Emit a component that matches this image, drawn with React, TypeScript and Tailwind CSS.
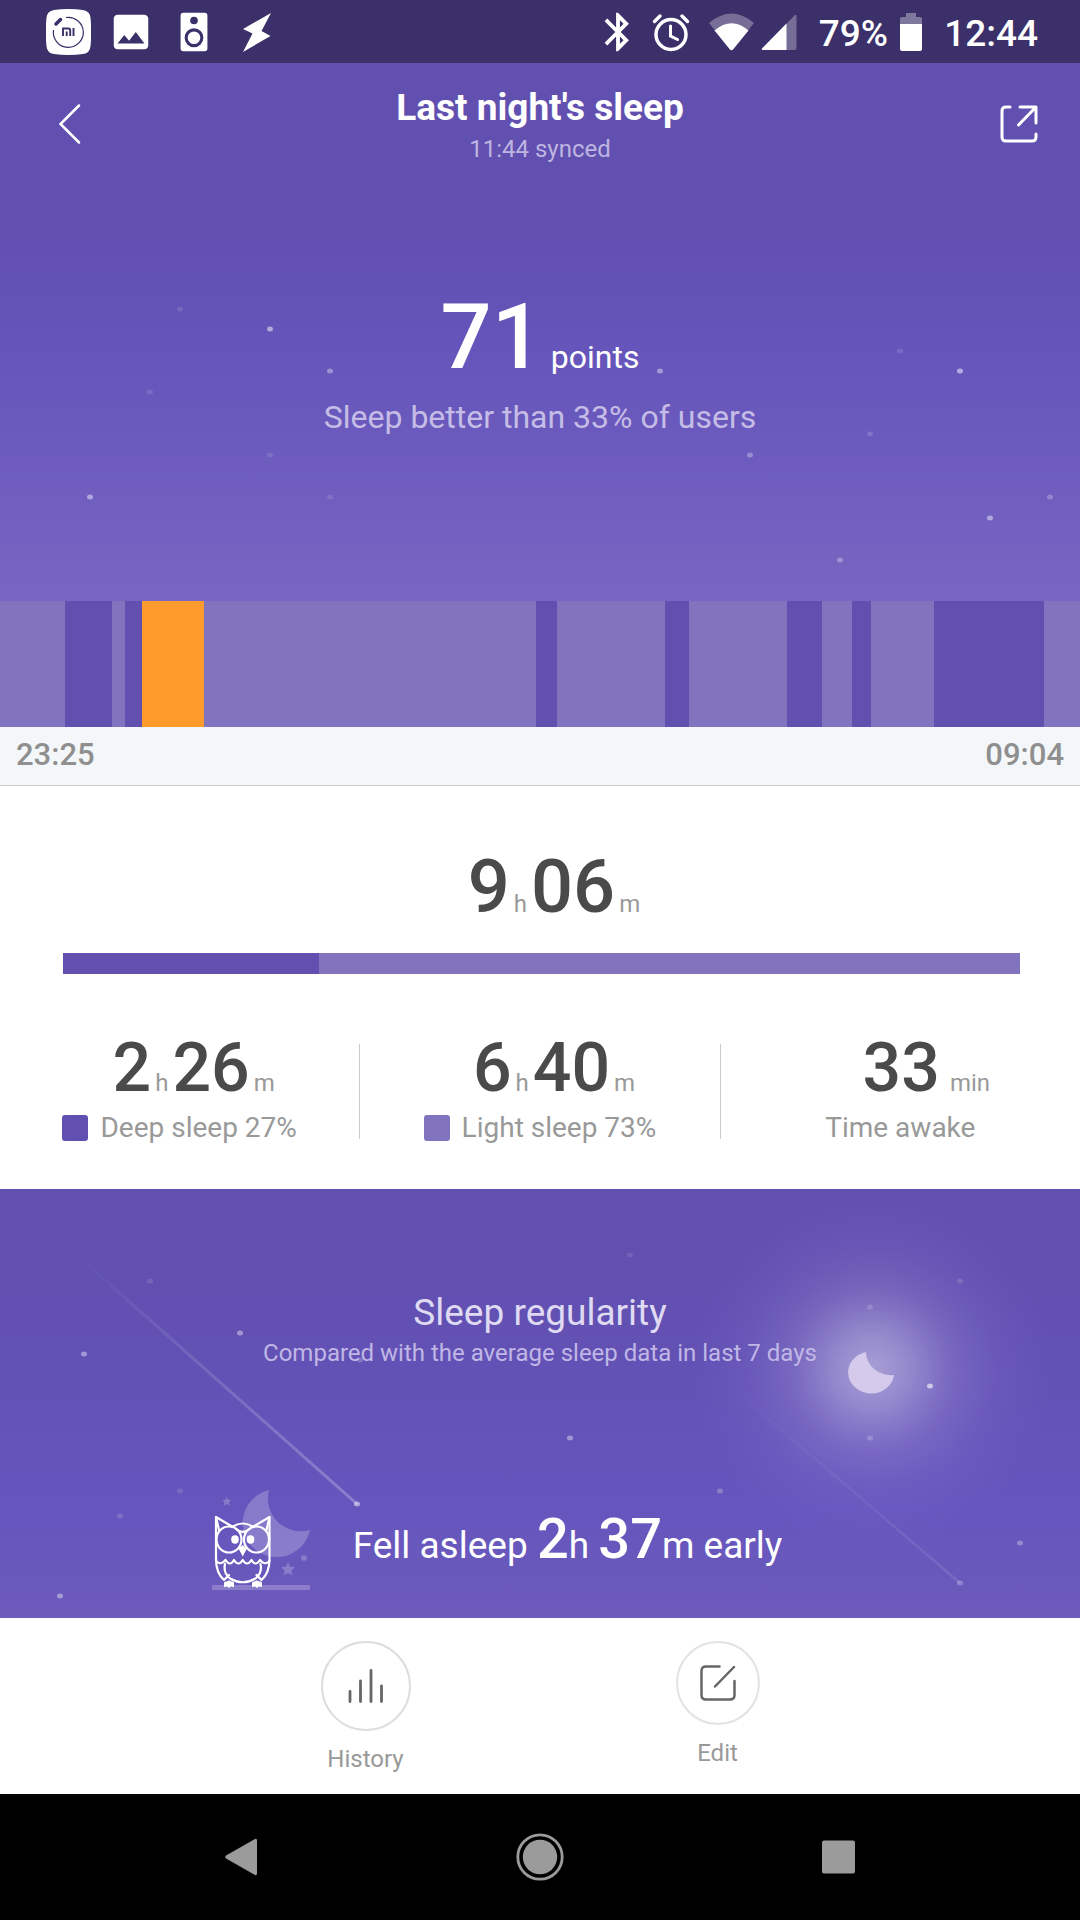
import type { ReactNode } from 'react';

type Star = { x: number; y: number; opacity: number };

const heroStars: Star[] = [
  { x: 180, y: 246, opacity: 0.12 },
  { x: 270, y: 266, opacity: 0.5 },
  { x: 330, y: 308, opacity: 0.35 },
  { x: 660, y: 308, opacity: 0.4 },
  { x: 900, y: 288, opacity: 0.12 },
  { x: 960, y: 308, opacity: 0.5 },
  { x: 150, y: 329, opacity: 0.12 },
  { x: 870, y: 371, opacity: 0.15 },
  { x: 270, y: 392, opacity: 0.12 },
  { x: 750, y: 392, opacity: 0.3 },
  { x: 90, y: 434, opacity: 0.45 },
  { x: 330, y: 434, opacity: 0.12 },
  { x: 1050, y: 434, opacity: 0.25 },
  { x: 990, y: 455, opacity: 0.45 },
  { x: 840, y: 497, opacity: 0.3 },
];

const nightStars: Star[] = [
  { x: 630, y: 66, opacity: 0.1 },
  { x: 150, y: 92, opacity: 0.12 },
  { x: 960, y: 92, opacity: 0.15 },
  { x: 870, y: 118, opacity: 0.15 },
  { x: 240, y: 144, opacity: 0.4 },
  { x: 84, y: 165, opacity: 0.4 },
  { x: 360, y: 171, opacity: 0.2 },
  { x: 930, y: 197, opacity: 0.6 },
  { x: 570, y: 249, opacity: 0.4 },
  { x: 870, y: 249, opacity: 0.2 },
  { x: 180, y: 302, opacity: 0.12 },
  { x: 720, y: 302, opacity: 0.25 },
  { x: 357, y: 315, opacity: 0.5 },
  { x: 120, y: 327, opacity: 0.15 },
  { x: 1020, y: 354, opacity: 0.3 },
  { x: 960, y: 394, opacity: 0.25 },
  { x: 60, y: 407, opacity: 0.4 },
];

type Phase = 'light' | 'deep' | 'awake';

const phaseColors: Record<Phase, string> = {
  light: 'bg-[#8273bf]',
  deep: 'bg-[#6150b0]',
  awake: 'bg-[#ff9b2c]',
};

const timeline: { phase: Phase; span: number }[] = [
  { phase: 'light', span: 65 },
  { phase: 'deep', span: 47 },
  { phase: 'light', span: 13 },
  { phase: 'deep', span: 17 },
  { phase: 'awake', span: 62 },
  { phase: 'light', span: 332 },
  { phase: 'deep', span: 21 },
  { phase: 'light', span: 108 },
  { phase: 'deep', span: 24 },
  { phase: 'light', span: 98 },
  { phase: 'deep', span: 35 },
  { phase: 'light', span: 30 },
  { phase: 'deep', span: 19 },
  { phase: 'light', span: 63 },
  { phase: 'deep', span: 110 },
  { phase: 'light', span: 36 },
];

function StatusBar() {
  return (
    <div className="flex h-[63px] items-center justify-between bg-[#3b3069] pr-[42px] pl-[46px] text-white">
      <div className="flex items-center gap-[17px]">
        <svg width="45" height="46" viewBox="0 0 45 46">
          <path d="M8 1Q22 -1 37 1Q44 2 44.500 9Q46 23 44.500 37Q44 44 37 45Q22 47 8 45Q1 44 .5 37Q-1 23 .5 9Q1 2 8 1Z" fill="#fff" />
          <path d="M20 8.500A15 15 0 1 1 7.500 21" fill="none" stroke="#3b3069" strokeWidth="1.200" />
          <path d="M10 15L14.500 10.500" stroke="#3b3069" strokeWidth="3.500" strokeLinecap="round" />
          <path d="M17 27V19.500H22.500Q24.200 19.500 24.200 21.500V27M20.700 22.500V27M27.500 19V27" fill="none" stroke="#3b3069" strokeWidth="1.900" />
        </svg>
        <svg width="46" height="46" viewBox="0 0 24 24" fill="currentColor">
          <path d="M21 19V5c0-1.100-.9-2-2-2H5c-1.100 0-2 .9-2 2v14c0 1.100.9 2 2 2h14c1.100 0 2-.9 2-2zM8.500 13.500l2.500 3.010L14.500 12l4.500 6H5l3.500-4.500z" />
        </svg>
        <svg width="46" height="46" viewBox="0 0 24 24">
          <rect x="5" y="2" width="14" height="20" rx="1.500" fill="currentColor" />
          <circle cx="12" cy="6" r="2" fill="#3b3069" />
          <circle cx="12" cy="15" r="4.100" fill="none" stroke="#3b3069" strokeWidth="1.600" />
        </svg>
        <svg width="46" height="46" viewBox="0 0 46 46" fill="currentColor">
          <path d="M37 4L9 20L18.500 24.500L9 43L36.500 27L27.500 22Z" />
        </svg>
      </div>
      <div className="flex items-center gap-[22px]">
        <div className="flex items-center gap-[7px]">
          <svg width="46" height="46" viewBox="0 0 24 24" fill="currentColor">
            <path d="M17.710 7.710L12 2h-1v7.590L6.410 5 5 6.410 10.590 12 5 17.590 6.410 19 11 14.410V22h1l5.710-5.710-4.300-4.290 4.300-4.290zM13 5.830l1.880 1.880L13 9.590V5.830zm1.880 10.460L13 18.170v-3.760l1.880 1.880z" />
          </svg>
          <svg width="46" height="46" viewBox="0 0 46 46" fill="none" stroke="currentColor" strokeWidth="3.500" strokeLinecap="round">
            <circle cx="23" cy="25.500" r="15" />
            <path d="M6.500 12.500L12 7M39.500 12.500L34 7" />
            <path d="M22.500 17V27L29.500 30.500" strokeWidth="3" />
          </svg>
          <svg className="ml-2" width="45" height="38" viewBox="0 0 45 38" fill="currentColor">
            <path d="M0 10Q22.500-9 45 10L24 36.500Q22.500 38 21 36.500Z" opacity=".3" />
            <path d="M5.500 17.500Q22.500 3 39.500 17.500L24 36.500Q22.500 38 21 36.500Z" />
          </svg>
          <svg width="36" height="36" viewBox="0 0 36 36" fill="currentColor">
            <path d="M34 1Q35.500 0 35.500 2V34Q35.500 36 33.500 36H2Q0 36 1 34.500Z" opacity=".3" />
            <path d="M25.500 9.500V36H2Q0 36 1 34.500Z" />
          </svg>
        </div>
        <div className="flex items-center gap-3">
          <span className="pt-1 text-[37px] leading-none font-medium">79%</span>
          <svg width="22" height="38" viewBox="0 0 22 38" fill="currentColor">
            <path d="M6 0H16V4H20Q22 4 22 6V11H0V6Q0 4 2 4H6Z" opacity=".35" />
            <path d="M0 11H22V36Q22 38 20 38H2Q0 38 0 36Z" />
          </svg>
        </div>
        <span className="pt-1 text-[37px] leading-none font-medium">12:44</span>
      </div>
    </div>
  );
}

function StarField({ stars, height, children }: { stars: Star[]; height: number; children?: ReactNode }) {
  return (
    <svg
      className="absolute inset-0 size-full"
      viewBox={`0 0 1080 ${height}`}
      preserveAspectRatio="xMidYMid slice"
      aria-hidden="true">
      {children}
      {stars.map((star) => (
        <ellipse key={`${star.x}-${star.y}`} cx={star.x} cy={star.y} rx="3" ry="2.500" fill="#fff" opacity={star.opacity} />
      ))}
    </svg>
  );
}

function Hero() {
  return (
    <section className="relative bg-linear-to-b from-[#6150b0] from-30% via-[#6655bb] via-55% to-[#7766c2] text-white">
      <StarField stars={heroStars} height={538} />
      <div className="relative">
        <header className="flex items-center justify-between px-[42px] py-5">
          <button aria-label="Back" className="flex w-[60px] justify-start pl-[17px]">
            <svg width="22" height="40" viewBox="0 0 22 40" fill="none" stroke="currentColor" strokeWidth="2.500" strokeLinecap="round">
              <path d="M20 1.500L1.500 20L20 38.500" />
            </svg>
          </button>
          <div className="text-center">
            <h1 className="text-[37px] leading-[50px] font-bold">Last night's sleep</h1>
            <p className="text-2xl leading-8 text-[#beb5e1]">11:44 synced</p>
          </div>
          <button aria-label="Share" className="flex w-[60px] justify-end">
            <svg width="38" height="38" viewBox="0 0 38 38" fill="none" stroke="currentColor" strokeWidth="3" strokeLinecap="round" strokeLinejoin="round">
              <path d="M10 2H6Q2 2 2 6V32Q2 36 6 36H32Q36 36 36 32V29" />
              <path d="M20 2H36V18M36 2L18.500 20" />
            </svg>
          </button>
        </header>
        <div className="pt-[105px] pb-[164px] text-center">
          <p className="flex items-baseline justify-center gap-2">
            <span className="text-[90px] leading-[96px] font-medium">71</span>
            <span className="text-[32px] leading-10">points</span>
          </p>
          <p className="mt-[11px] text-[32px] leading-10 text-[#c5bde6]">Sleep better than 33% of users</p>
        </div>
      </div>
    </section>
  );
}

function Timeline() {
  return (
    <section>
      <div className="flex h-[126px]">
        {timeline.map(({ phase, span }, i) => (
          <div key={i} className={phaseColors[phase]} style={{ flex: `${span} 0 0` }} />
        ))}
      </div>
      <div className="flex justify-between border-b border-[#cccccc] bg-[#f4f7fa] px-4 pt-2 pb-[10px] text-[31px] leading-10 font-medium text-[#8f8f8f]">
        <span>23:25</span>
        <span>09:04</span>
      </div>
    </section>
  );
}

function Duration({ hours, minutes, className }: { hours: string; minutes: string; className: string }) {
  return (
    <p className="flex items-baseline justify-center gap-1 pl-7 text-2xl text-[#999999]">
      <span className={className}>{hours}</span>
      h
      <span className={className}>{minutes}</span>
      m
    </p>
  );
}

function Summary() {
  const digits = 'text-[68px] leading-[72px] font-medium text-[#4a4a4a]';
  const label = 'mt-[6px] flex items-center justify-center gap-3 text-[28px] leading-9 text-[#999999]';

  return (
    <section className="bg-white pt-[61px] pb-[43px]">
      <Duration hours="9" minutes="06" className="text-[74px] leading-[80px] font-medium text-[#4a4a4a]" />
      <div className="mt-[26px] mr-[60px] ml-[63px] flex h-[21px] bg-[#8273bf]">
        <div className="bg-[#6150b0]" style={{ width: '26.8%' }} />
      </div>
      <div className="mt-[58px] flex">
        <div className="flex-1">
          <Duration hours="2" minutes="26" className={digits} />
          <p className={label}>
            <span className="size-[26px] rounded-[3px] bg-[#6150b0]" />
            Deep sleep 27%
          </p>
        </div>
        <div className="mt-3 mb-[7px] w-px bg-[#cccccc]" />
        <div className="flex-1">
          <Duration hours="6" minutes="40" className={digits} />
          <p className={label}>
            <span className="size-[26px] rounded-[3px] bg-[#8273bf]" />
            Light sleep 73%
          </p>
        </div>
        <div className="mt-3 mb-[7px] w-px bg-[#cccccc]" />
        <div className="flex-1">
          <p className="flex items-baseline justify-center gap-[10px] pl-[52px] text-2xl text-[#999999]">
            <span className={digits}>33</span>
            min
          </p>
          <p className={label}>Time awake</p>
        </div>
      </div>
    </section>
  );
}

function Owl() {
  return (
    <svg width="99" height="101" viewBox="0 0 99 101" aria-hidden="true">
      <g fill="#fff" opacity=".22">
        <path d="M57 1A34 34 0 1 0 98 41A33 33 0 0 1 57 1Z" />
        <path d="M14.700 7.500L16 10.700L19.500 11L17 13.300L17.800 17L14.700 15L11.600 17L12.400 13.300L10 11L13.400 10.700Z" />
        <path d="M76 73L78 77.800L83 78.200L79.200 81.500L80.400 86.500L76 83.800L71.600 86.500L72.800 81.500L69 78.200L74 77.800Z" />
        <circle cx="92" cy="69" r="2.800" />
        <rect x="0" y="96" width="98" height="5" />
      </g>
      <g fill="none" stroke="#fff" strokeWidth="2.200" strokeLinejoin="round" strokeLinecap="round">
        <path d="M4 50V28L20 37.500M57.500 50V28L41.500 37.500" />
        <path d="M4 28L7 41M57.500 28L54.500 41" />
        <path d="M20 38Q30.700 31 41.500 38M24 40Q30.700 46 37.500 40" />
        <ellipse cx="17" cy="50.500" rx="12.500" ry="13" />
        <ellipse cx="44.500" cy="50.500" rx="12.500" ry="13" />
        <path d="M4 50V70Q4 84 12 91L17 86M57.500 50V70Q57.500 84 49.500 91L44.500 86" />
        <path d="M4 72Q9 77 13.500 71Q18 78 22 71Q26.500 78 30.700 71Q35 78 39.500 71Q43.500 78 48 71Q52.500 77 57.500 72" />
        <path d="M13 75Q11 84 18 89.500Q30.700 97 43.500 89.500Q50.500 84 48.500 75" />
      </g>
      <g fill="#fff">
        <ellipse cx="23" cy="50.500" rx="3.800" ry="4.200" />
        <ellipse cx="38.500" cy="50.500" rx="3.800" ry="4.200" />
        <path d="M30.700 56L35 59.500L30.700 67.500L26.500 59.500Z" />
        <path d="M12 98V94Q12 92 14.500 92.500Q17 90.500 19.500 92.500Q22 92 22 94V98L18.800 97.500L17 99L15.200 97.500Z" />
        <path d="M40 98V94Q40 92 42.500 92.500Q45 90.500 47.500 92.500Q50 92 50 94V98L46.800 97.500L45 99L43.200 97.500Z" />
      </g>
    </svg>
  );
}

function Regularity() {
  const digits = 'text-[56px] font-medium';

  return (
    <section className="relative bg-linear-to-b from-[#6150b0] from-20% via-[#6655bd] via-75% to-[#6c5bbb] text-white">
      <StarField stars={nightStars} height={429}>
        <defs>
          <radialGradient id="glow">
            <stop offset="0" stopColor="#fff" stopOpacity=".44" />
            <stop offset=".2" stopColor="#fff" stopOpacity=".32" />
            <stop offset=".45" stopColor="#f0e8ff" stopOpacity=".14" />
            <stop offset=".7" stopColor="#c8b8ff" stopOpacity=".06" />
            <stop offset="1" stopColor="#a090ff" stopOpacity="0" />
          </radialGradient>
          <linearGradient id="trail" x1="0" y1="0" x2="1" y2="1">
            <stop offset="0" stopColor="#fff" stopOpacity="0" />
            <stop offset="1" stopColor="#fff" stopOpacity=".26" />
          </linearGradient>
        </defs>
        <circle cx="872" cy="180" r="180" fill="url(#glow)" />
        <path d="M866 163A23 21 0 1 0 894 186A25 23 0 0 1 866 163Z" fill="#d5caec" />
        <path d="M70 60L357 315" stroke="url(#trail)" strokeWidth="3" />
        <path d="M720 188L960 394" stroke="url(#trail)" strokeWidth="2.500" opacity=".4" />
      </StarField>
      <div className="relative pt-[99px] pb-7">
        <h2 className="text-center text-[37px] leading-[49px] text-[#dfdaf2]">Sleep regularity</h2>
        <p className="text-center text-2xl leading-8 text-[#c0b7e6]">
          Compared with the average sleep data in last 7 days
        </p>
        <div className="mt-[120px] flex items-end justify-center gap-[42px] pr-[86px]">
          <Owl />
          <p className="pb-3 text-[37px] leading-[64px]">
            Fell asleep <span className={digits}>2</span>h <span className={digits}>37</span>m early
          </p>
        </div>
      </div>
    </section>
  );
}

function Actions() {
  return (
    <section className="flex items-start justify-center gap-[265px] bg-white pt-[23px] pb-[19px] text-2xl leading-8 text-[#999999]">
      <button className="flex flex-col items-center gap-3">
        <span className="flex size-[90px] items-center justify-center rounded-full border-2 border-[#dddddd]">
          <svg width="36" height="36" viewBox="0 0 36 36" fill="none" stroke="#666" strokeWidth="2.800" strokeLinecap="round">
            <path d="M2 23.500V33.500M12.500 13V33.500M23 2.500V33.500M33.500 18V33.500" />
          </svg>
        </span>
        History
      </button>
      <button className="flex flex-col items-center gap-3">
        <span className="flex size-[84px] items-center justify-center rounded-full border-2 border-[#e2e2e2]">
          <svg width="36" height="36" viewBox="0 0 36 36" fill="none" stroke="#666" strokeWidth="2.500" strokeLinecap="round">
            <path d="M19.500 1.500H6Q1.500 1.500 1.500 6V30Q1.500 34.500 6 34.500H30Q34.500 34.500 34.500 30V16" />
            <path d="M34 2L15 21.500" />
          </svg>
        </span>
        Edit
      </button>
    </section>
  );
}

function NavigationBar() {
  return (
    <nav className="flex items-center justify-center gap-[251px] bg-black py-[39px] text-[#9b9b9b]">
      <button aria-label="Back">
        <svg width="48" height="48" viewBox="0 0 48 48" fill="currentColor">
          <path d="M38 6Q40 5 40 7.500V40.500Q40 43 38 42L9 25.500Q7.500 24 9 22.500Z" />
        </svg>
      </button>
      <button aria-label="Home">
        <svg width="48" height="48" viewBox="0 0 48 48">
          <circle cx="24" cy="24" r="22.200" fill="none" stroke="currentColor" strokeWidth="2.800" />
          <circle cx="24" cy="24" r="17.200" fill="currentColor" />
        </svg>
      </button>
      <button aria-label="Recent apps">
        <svg width="48" height="48" viewBox="0 0 48 48" fill="currentColor">
          <rect x="7" y="7.500" width="33" height="33" rx="2" />
        </svg>
      </button>
    </nav>
  );
}

export default function App() {
  return (
    <main className="bg-white font-[Roboto,sans-serif]">
      <StatusBar />
      <Hero />
      <Timeline />
      <Summary />
      <Regularity />
      <Actions />
      <NavigationBar />
    </main>
  );
}
